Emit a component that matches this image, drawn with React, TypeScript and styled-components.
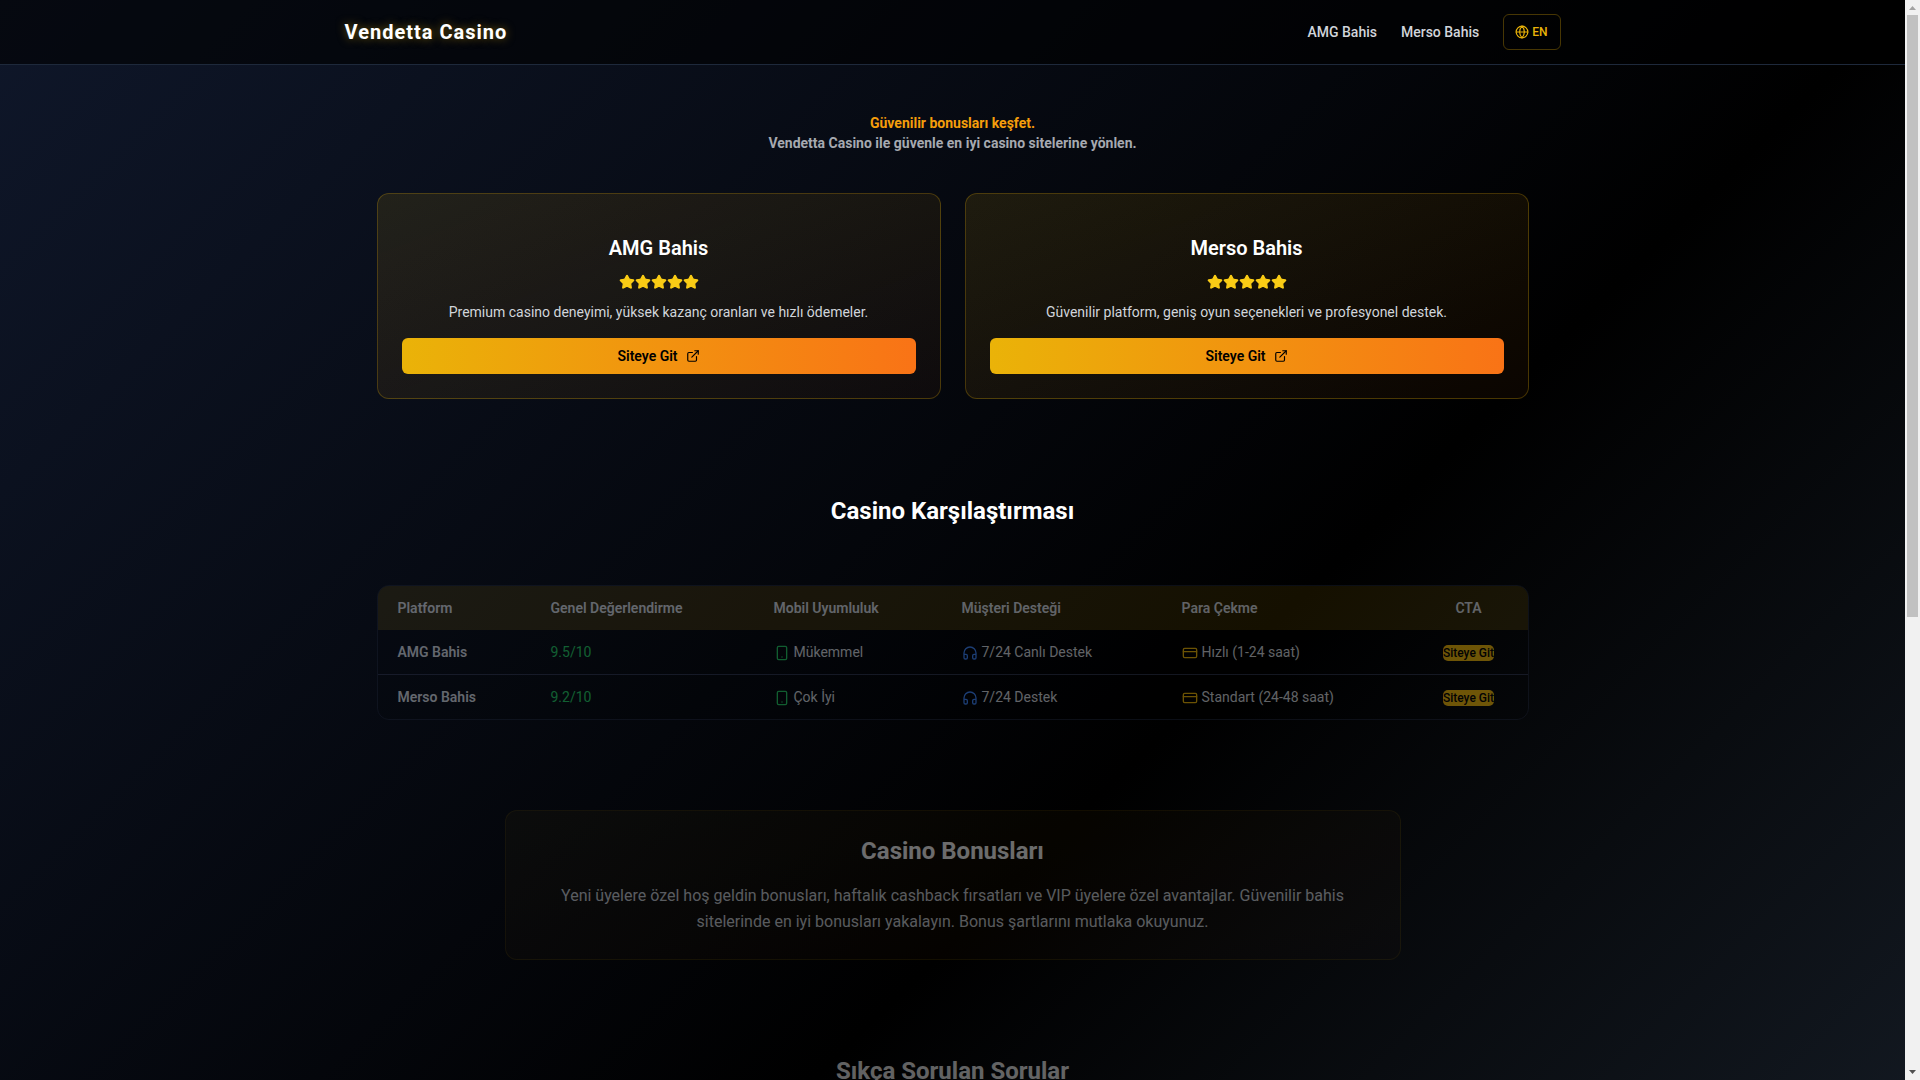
import React from "react";
import styled, { createGlobalStyle } from "styled-components";
import { CreditCard, ExternalLink, Globe, Headphones, Smartphone, Star } from "lucide-react";

const Global = createGlobalStyle`
  html, body, #root { height: 100%; overflow: hidden; }
  body { margin: 0; background: #000; font-family: Roboto, "Liberation Sans", sans-serif; color: #fff; }
  * { box-sizing: border-box; }
`;

const Shell = styled.div`
  height: 100vh;
  display: flex;
`;

const Scroller = styled.div`
  flex: 1;
  min-width: 0;
  overflow-y: auto;
  scrollbar-width: none;
`;

const Rail = styled.div`
  flex: 0 0 15px;
  display: flex;
  flex-direction: column;
  align-items: center;
  background: #f1f1f1;
`;

const RailArrow = styled.svg`
  flex: 0 0 15px;
  width: 15px;
  height: 15px;
  display: block;
`;

const RailThumb = styled.div`
  flex: 0 0 602px;
  width: 11px;
  background: #c1c1c1;
`;

const RailTrack = styled.div`
  flex: 1;
`;

const Page = styled.div`
  min-height: 1884px;
  display: flex;
  flex-direction: column;
  background: linear-gradient(to bottom right, #0f172a 0%, #000 50%, #1f2937 100%);
`;

const Header = styled.header`
  height: 65px;
  background: rgba(0, 0, 0, 0.6);
  border-bottom: 1px solid #1e293b;
`;

const HeaderInner = styled.div`
  max-width: 1280px;
  height: 100%;
  margin: 0 auto;
  padding: 0 32px;
  display: flex;
  align-items: center;
  justify-content: space-between;
`;

const Logo = styled.div`
  font-size: 20px;
  line-height: 28px;
  font-weight: 700;
  letter-spacing: 1px;
  color: #fff;
  text-shadow: 0 0 10px rgba(234, 179, 8, 0.5);
`;

const Nav = styled.nav`
  display: flex;
  align-items: center;
  gap: 24px;
`;

const NavLink = styled.a`
  font-size: 14px;
  line-height: 20px;
  font-weight: 500;
  color: #d1d5db;
`;

const LangButton = styled.button`
  height: 36px;
  padding: 0 12px 0 11px;
  display: flex;
  align-items: center;
  gap: 3px;
  background: transparent;
  border: 1px solid rgba(234, 179, 8, 0.3);
  border-radius: 6px;
  color: #eab308;
  font: 500 12px/16px Roboto, sans-serif;
`;

const Main = styled.main`
  width: 1152px;
  margin: 0 auto;
  padding-top: 48px;
`;

const Hero = styled.div`
  text-align: center;
  font-size: 14px;
  line-height: 20px;
  font-weight: 700;
  margin-bottom: 40px;
`;

const HeroAccent = styled.div`
  color: #f59e0b;
`;

const HeroLine = styled.div`
  color: #a6a9b0;
`;

const CardGrid = styled.div`
  display: grid;
  grid-template-columns: 1fr 1fr;
  gap: 24px;
`;

const Card = styled.article`
  height: 206px;
  padding: 40px 24px 0;
  text-align: center;
  border: 1px solid rgba(234, 179, 8, 0.25);
  border-radius: 12px;
  background: linear-gradient(to bottom right, rgba(234, 179, 8, 0.11), rgba(249, 115, 22, 0.045));
`;

const CardTitle = styled.h3`
  margin: 0 0 12px;
  font-size: 20px;
  line-height: 28px;
  font-weight: 600;
  color: #fff;
`;

const Stars = styled.div`
  height: 16px;
  margin-bottom: 12px;
  display: flex;
  justify-content: center;
`;

const StarIcon = styled(Star)`
  display: block;
  color: #facc15;
  fill: #facc15;
`;

const CardText = styled.p`
  margin: 0 0 16px;
  font-size: 14px;
  line-height: 20px;
  color: #d1d5db;
`;

const CardButton = styled.a`
  height: 36px;
  display: flex;
  align-items: center;
  justify-content: center;
  gap: 8px;
  border-radius: 6px;
  background: linear-gradient(to right, #eab308, #f97316);
  color: #000;
  font-size: 14px;
  font-weight: 600;
`;

const SectionTitle = styled.h2<{ $fade?: number; $top: number; $bottom: number }>`
  margin: ${(p) => p.$top}px 0 ${(p) => p.$bottom}px;
  font-size: 24px;
  line-height: 32px;
  font-weight: 700;
  text-align: center;
  color: #fff;
  opacity: ${(p) => p.$fade ?? 1};
`;

const TableFrame = styled.div`
  border: 1px solid #1a2030;
  border-radius: 12px;
  overflow: hidden;
  opacity: 0.46;
`;

const Table = styled.table`
  width: 100%;
  table-layout: fixed;
  border-collapse: separate;
  border-spacing: 0;
  font-size: 14px;
  line-height: 20px;
`;

const HeadCell = styled.th<{ $width: number; $center?: boolean }>`
  width: ${(p) => p.$width}px;
  height: 44px;
  padding: 12px 20px;
  text-align: ${(p) => (p.$center ? "center" : "left")};
  font-weight: 600;
  color: #d1d5db;
  background: rgba(234, 179, 8, 0.2);
`;

const Cell = styled.td<{ $center?: boolean; $last?: boolean }>`
  padding: 12px 20px;
  height: ${(p) => (p.$last ? 44 : 45)}px;
  text-align: ${(p) => (p.$center ? "center" : "left")};
  color: #d1d5db;
  border-bottom: ${(p) => (p.$last ? "none" : "1px solid #2b3147")};
  background: rgba(0, 0, 0, 0.2);
`;

const NameCell = styled(Cell)`
  font-weight: 600;
`;

const ScoreCell = styled(Cell)`
  color: #22c55e;
`;

const IconWrap = styled.span<{ $color: string }>`
  display: inline-flex;
  margin-right: 4px;
  vertical-align: -4px;
  color: ${(p) => p.$color};
`;

const MiniCta = styled.button`
  display: inline-block;
  padding: 0;
  border: none;
  border-radius: 5px;
  background: #eab308;
  color: #000;
  font: 500 12px/16px Roboto, sans-serif;
  vertical-align: middle;
`;

const BonusCard = styled.section`
  width: 896px;
  margin: 90px auto 0;
  padding: 24px 32px;
  text-align: center;
  border: 1px solid rgba(234, 179, 8, 0.15);
  border-radius: 12px;
  background: linear-gradient(to bottom right, rgba(234, 179, 8, 0.08), rgba(249, 115, 22, 0.04));
  opacity: 0.42;
`;

const BonusTitle = styled.h2`
  margin: 0 0 16px;
  font-size: 24px;
  line-height: 32px;
  font-weight: 700;
  color: #fff;
`;

const BonusText = styled.p`
  margin: 0;
  font-size: 16px;
  line-height: 26px;
  color: #d1d5db;
`;

const FaqList = styled.div`
  width: 896px;
  margin: 0 auto;
  display: grid;
  gap: 16px;
  opacity: 0.3;
`;

const FaqItem = styled.div`
  padding: 20px 24px;
  border: 1px solid rgba(234, 179, 8, 0.3);
  border-radius: 12px;
  font-size: 16px;
  line-height: 24px;
  color: #d1d5db;
`;

const Footer = styled.footer`
  margin-top: auto;
  padding: 32px;
  text-align: center;
  font-size: 14px;
  line-height: 20px;
  color: #6b7280;
  border-top: 1px solid #1e293b;
`;

const rows = [
  { name: "AMG Bahis", score: "9.5/10", mobile: "Mükemmel", support: "7/24 Canlı Destek", pay: "Hızlı (1-24 saat)" },
  { name: "Merso Bahis", score: "9.2/10", mobile: "Çok İyi", support: "7/24 Destek", pay: "Standart (24-48 saat)" },
];

const cards = [
  { name: "AMG Bahis", text: "Premium casino deneyimi, yüksek kazanç oranları ve hızlı ödemeler." },
  { name: "Merso Bahis", text: "Güvenilir platform, geniş oyun seçenekleri ve profesyonel destek." },
];

const faqs = [
  "Hangi casino sitesi en güvenilir?",
  "Bonuslar nasıl çekilir?",
  "Para çekme işlemleri ne kadar sürer?",
  "Mobil cihazlardan oynayabilir miyim?",
];

export default function App() {
  return (
    <Shell>
      <Global />
      <Scroller>
        <Page>
          <Header>
            <HeaderInner>
              <Logo>Vendetta Casino</Logo>
              <Nav>
                <NavLink>AMG Bahis</NavLink>
                <NavLink>Merso Bahis</NavLink>
                <LangButton>
                  <Globe size={14} />
                  EN
                </LangButton>
              </Nav>
            </HeaderInner>
          </Header>
          <Main>
            <Hero>
              <HeroAccent>Güvenilir bonusları keşfet.</HeroAccent>
              <HeroLine>Vendetta Casino ile güvenle en iyi casino sitelerine yönlen.</HeroLine>
            </Hero>
            <CardGrid>
              {cards.map((c) => (
                <Card key={c.name}>
                  <CardTitle>{c.name}</CardTitle>
                  <Stars>
                    {[0, 1, 2, 3, 4].map((i) => (
                      <StarIcon key={i} size={16} />
                    ))}
                  </Stars>
                  <CardText>{c.text}</CardText>
                  <CardButton>
                    Siteye Git
                    <ExternalLink size={14} />
                  </CardButton>
                </Card>
              ))}
            </CardGrid>
            <SectionTitle $top={96} $bottom={58}>Casino Karşılaştırması</SectionTitle>
            <TableFrame>
              <Table>
                <thead>
                  <tr>
                    <HeadCell $width={153}>Platform</HeadCell>
                    <HeadCell $width={223}>Genel Değerlendirme</HeadCell>
                    <HeadCell $width={188}>Mobil Uyumluluk</HeadCell>
                    <HeadCell $width={220}>Müşteri Desteği</HeadCell>
                    <HeadCell $width={248}>Para Çekme</HeadCell>
                    <HeadCell $width={118} $center>CTA</HeadCell>
                  </tr>
                </thead>
                <tbody>
                  {rows.map((r, i) => {
                    const last = i === rows.length - 1;
                    return (
                      <tr key={r.name}>
                        <NameCell $last={last}>{r.name}</NameCell>
                        <ScoreCell $last={last}>{r.score}</ScoreCell>
                        <Cell $last={last}>
                          <IconWrap $color="#22c55e"><Smartphone size={16} /></IconWrap>
                          {r.mobile}
                        </Cell>
                        <Cell $last={last}>
                          <IconWrap $color="#3b82f6"><Headphones size={16} /></IconWrap>
                          {r.support}
                        </Cell>
                        <Cell $last={last}>
                          <IconWrap $color="#eab308"><CreditCard size={16} /></IconWrap>
                          {r.pay}
                        </Cell>
                        <Cell $last={last} $center>
                          <MiniCta>Siteye Git</MiniCta>
                        </Cell>
                      </tr>
                    );
                  })}
                </tbody>
              </Table>
            </TableFrame>
            <BonusCard>
              <BonusTitle>Casino Bonusları</BonusTitle>
              <BonusText>
                Yeni üyelere özel hoş geldin bonusları, haftalık cashback fırsatları ve VIP üyelere özel avantajlar.
                Güvenilir bahis sitelerinde en iyi bonusları yakalayın. Bonus şartlarını mutlaka okuyunuz.
              </BonusText>
            </BonusCard>
            <SectionTitle $fade={0.38} $top={95} $bottom={32}>Sıkça Sorulan Sorular</SectionTitle>
            <FaqList>
              {faqs.map((q) => (
                <FaqItem key={q}>{q}</FaqItem>
              ))}
            </FaqList>
          </Main>
          <Footer>© 2025 Vendetta Casino</Footer>
        </Page>
      </Scroller>
      <Rail>
        <RailArrow viewBox="0 0 15 15"><polygon points="7.5,6 11,10 4,10" fill="#a3a3a3" /></RailArrow>
        <RailThumb />
        <RailTrack />
        <RailArrow viewBox="0 0 15 15"><polygon points="4,5 11,5 7.5,9" fill="#505050" /></RailArrow>
      </Rail>
    </Shell>
  );
}
